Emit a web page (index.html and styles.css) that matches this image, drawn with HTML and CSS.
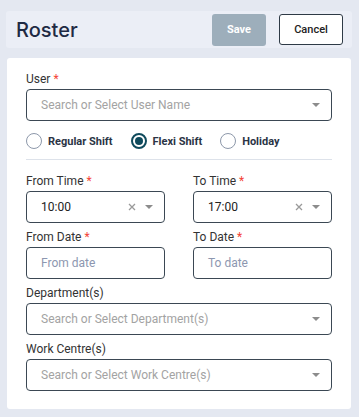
FILE: index.html
```html
<!DOCTYPE html>
<html lang="en">
<head>
    <meta charset="UTF-8">
    <meta name="viewport" content="width=device-width, initial-scale=1.0">
    <title>Roster</title>
    <link rel="stylesheet" href="styles.css">
</head>
<body>
    <div class="header">
        <h1>Roster</h1>
        <div class="actions">
            <button class="button button-save" disabled>Save</button>
            <button class="button button-cancel">Cancel</button>
        </div>
    </div>

    <div class="card">
        <div class="field">
            <label>User <span class="req">*</span></label>
            <div class="select">
                <span class="placeholder">Search or Select User Name</span>
                <span class="arrow"></span>
            </div>
        </div>

        <div class="radios">
            <label class="radio"><span class="dot"></span>Regular Shift</label>
            <label class="radio checked"><span class="dot"></span>Flexi Shift</label>
            <label class="radio"><span class="dot"></span>Holiday</label>
        </div>
        <hr class="divider">

        <div class="row">
            <div class="field">
                <label>From Time <span class="req">*</span></label>
                <div class="select">
                    <span class="value">10:00</span>
                    <svg class="clear" width="8" height="8" viewBox="0 0 8 8"><path d="M1 1L7 7M7 1L1 7" stroke="#9a9a9a" stroke-width="1.3"/></svg>
                    <span class="arrow"></span>
                </div>
            </div>
            <div class="field">
                <label>To Time <span class="req">*</span></label>
                <div class="select">
                    <span class="value">17:00</span>
                    <svg class="clear" width="8" height="8" viewBox="0 0 8 8"><path d="M1 1L7 7M7 1L1 7" stroke="#9a9a9a" stroke-width="1.3"/></svg>
                    <span class="arrow"></span>
                </div>
            </div>
        </div>

        <div class="row">
            <div class="field">
                <label>From Date <span class="req">*</span></label>
                <div class="select">
                    <span class="placeholder date">From date</span>
                </div>
            </div>
            <div class="field">
                <label>To Date <span class="req">*</span></label>
                <div class="select">
                    <span class="placeholder date">To date</span>
                </div>
            </div>
        </div>

        <div class="field">
            <label>Department(s)</label>
            <div class="select">
                <span class="placeholder">Search or Select Department(s)</span>
                <span class="arrow"></span>
            </div>
        </div>

        <div class="field">
            <label>Work Centre(s)</label>
            <div class="select">
                <span class="placeholder">Search or Select Work Centre(s)</span>
                <span class="arrow"></span>
            </div>
        </div>
    </div>
</body>
</html>
```

FILE: styles.css
```css
body {
    font-family: 'Roboto', sans-serif;
    background-color: #e4e8f1;
    margin: 0;
    padding: 11px 7px 0 6px;
    color: #333;
}
.header {
    background: #ebeef6;
    border-radius: 3px;
    height: 37px;
    display: flex;
    align-items: center;
    justify-content: space-between;
    padding: 0 9px 0 10px;
}
h1 {
    font-family: 'Inter', sans-serif;
    font-size: 20px;
    font-weight: 500;
    color: #1f2a44;
    margin: 0;
}
.actions {
    display: flex;
    gap: 13px;
}
.button {
    font-family: 'Roboto', sans-serif;
    font-size: 11px;
    height: 32px;
    border-radius: 3px;
    cursor: pointer;
}
.button-save {
    width: 54px;
    background-color: #9daebb;
    color: #fff;
    font-weight: bold;
    border: none;
}
.button-cancel {
    width: 64px;
    height: 31px;
    background: #fff;
    color: #222;
    font-weight: 500;
    border: 1px solid #2e3a46;
}
.card {
    background: #fff;
    border-radius: 3px;
    margin: 10px 1px 0 1px;
    padding: 13px 19px 18px 19px;
    display: flex;
    flex-direction: column;
    gap: 6px;
}
.field label {
    display: block;
    font-size: 12px;
    line-height: 16px;
    margin-bottom: 2px;
    color: #333;
}
.req {
    color: #f44336;
}
.select {
    height: 32px;
    box-sizing: border-box;
    border: 1px solid #3b4854;
    border-radius: 4px;
    display: flex;
    align-items: center;
    padding: 0 11px 0 14px;
    font-size: 12px;
}
.placeholder {
    flex: 1;
    color: #a3a3a3;
}
.placeholder.date {
    color: #8d97b0;
}
.value {
    flex: 1;
    color: #222;
}
.clear {
    margin-right: 9px;
}
.arrow {
    width: 0;
    height: 0;
    border-left: 4px solid transparent;
    border-right: 4px solid transparent;
    border-top: 4px solid #8c8c8c;
}
.radios {
    display: flex;
    gap: 18px;
    margin-top: 6px;
}
.radio {
    display: flex;
    align-items: center;
    gap: 6px;
    font-size: 11px;
    font-weight: bold;
    color: #2b3445;
}
.dot {
    width: 16px;
    height: 16px;
    box-sizing: border-box;
    border: 1px solid #8d98aa;
    border-radius: 50%;
    display: flex;
    align-items: center;
    justify-content: center;
}
.radio.checked .dot {
    border: 2px solid #0f4a5c;
}
.radio.checked .dot::after {
    content: "";
    width: 8px;
    height: 8px;
    border-radius: 50%;
    background: #0f4a5c;
}
.divider {
    border: none;
    border-top: 1px solid #dde2ea;
    margin: 4px 0 7px 0;
}
.row {
    display: grid;
    grid-template-columns: 1fr 1fr;
    gap: 28px;
}
```
